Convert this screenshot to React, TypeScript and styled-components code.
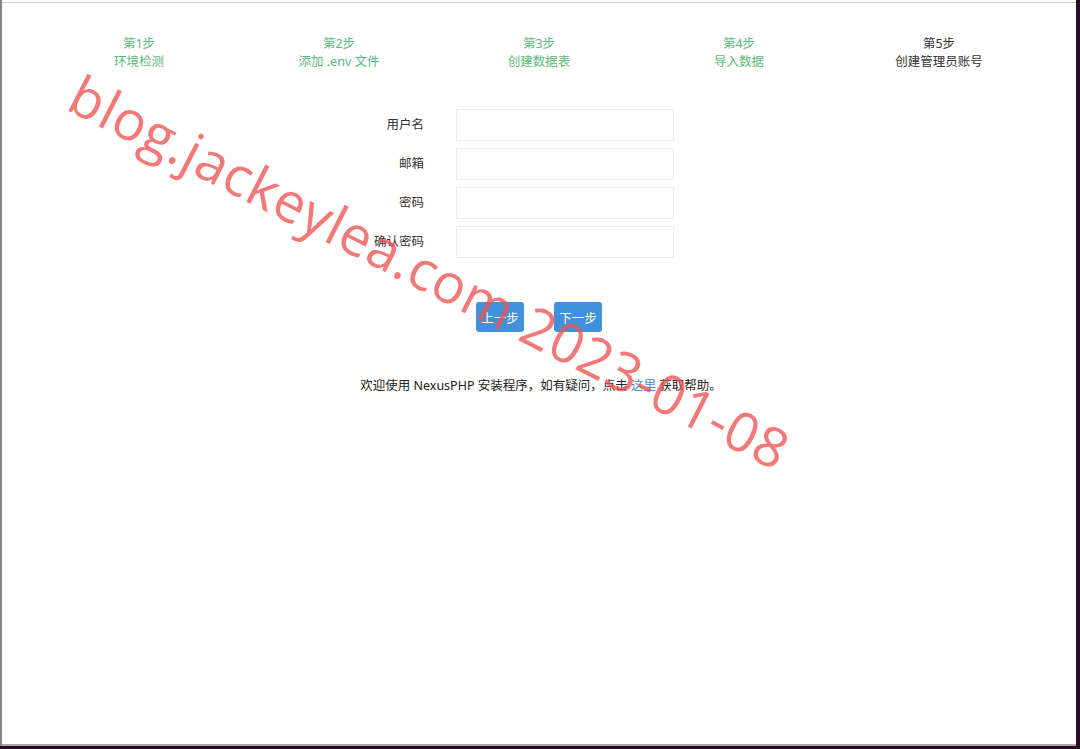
import styled, { createGlobalStyle } from 'styled-components';

const GlobalStyle = createGlobalStyle`
  html, body {
    margin: 0;
    padding: 0;
    background: #2c0a22;
    font-family: "Noto Sans", "Noto Sans CJK SC", sans-serif;
  }
`;

type Step = { no: number; title: string };

const steps: Step[] = [
    { no: 1, title: '环境检测' },
    { no: 2, title: '添加 .env 文件' },
    { no: 3, title: '创建数据表' },
    { no: 4, title: '导入数据' },
    { no: 5, title: '创建管理员账号' },
];

const fields = ['用户名', '邮箱', '密码', '确认密码'];

function App() {
    const current = 5;

    return (
        <>
            <GlobalStyle />
            <Desktop>
                <Window>
                    <TopRule />
                    <Page>
                        <Steps>
                            {steps.map(s => (
                                <StepItem key={s.no} done={s.no < current}>
                                    <div>第{s.no}步</div>
                                    <div>{s.title}</div>
                                </StepItem>
                            ))}
                        </Steps>

                        <Form>
                            {fields.map(f => (
                                <FormRow key={f}>
                                    <Label>{f}</Label>
                                    <Input type={f.includes('密码') ? 'password' : 'text'} />
                                </FormRow>
                            ))}
                        </Form>

                        <Actions>
                            <Button>上一步</Button>
                            <Button>下一步</Button>
                        </Actions>

                        <Footer>
                            欢迎使用 NexusPHP 安装程序，如有疑问，点击 <HelpLink href="#">这里</HelpLink> 获取帮助。
                        </Footer>
                    </Page>

                    {/* blog stamp laid across the page */}
                    <Stamp>blog.jackeylea.com 2023-01-08</Stamp>
                </Window>
                <SideStrip />
            </Desktop>
        </>
    );
}

const Desktop = styled.div`
  display: flex;
  height: 749px;
  overflow: hidden;
`;

const Window = styled.div`
  position: relative;
  width: 1074px;
  height: 744px;
  margin-left: 2px;
  background: #fff;
  border-bottom: 2px solid #a9a9a9;
  box-shadow: -2px 0 0 #8e7d88;
  overflow: hidden;
`;

const SideStrip = styled.div`
  flex: 1;
  background: #2c0a22;
`;

const TopRule = styled.div`
  height: 2px;
  border-bottom: 1px solid #cfcfcf;
`;

const Page = styled.div`
  display: flex;
  flex-direction: column;
  align-items: stretch;
  padding-top: 32px;
  font-size: 12.5px;
  color: #333;
`;

const Steps = styled.div`
  display: grid;
  grid-template-columns: repeat(5, 200px);
  justify-content: center;
`;

const StepItem = styled.div<{ done: boolean }>`
  text-align: center;
  line-height: 18px;
  color: ${props => props.done ? '#5cb87a' : '#333'};
`;

const Form = styled.div`
  display: flex;
  flex-direction: column;
  gap: 7px;
  margin-top: 38px;
`;

const FormRow = styled.div`
  display: grid;
  grid-template-columns: 422px 218px;
  column-gap: 32px;
  align-items: center;
`;

const Label = styled.label`
  text-align: right;
  line-height: 18px;
`;

const Input = styled.input`
  box-sizing: border-box;
  height: 32px;
  width: 100%;
  border: 1px solid #ececec;
  background: #fff;
  outline: none;
`;

const Actions = styled.div`
  display: flex;
  justify-content: center;
  gap: 30px;
  margin-top: 44px;
`;

const Button = styled.button`
  width: 48px;
  height: 30px;
  padding: 0;
  border: none;
  border-radius: 3px;
  background: #3f91db;
  color: #fff;
  font-family: inherit;
  font-size: 12.5px;
  cursor: pointer;
`;

const Footer = styled.p`
  margin: 45px 0 0;
  text-align: center;
  line-height: 18px;
  padding-left: 4px;
  color: #222;
`;

const HelpLink = styled.a`
  color: #4a8fd0;
  text-decoration: none;
`;

const Stamp = styled.div`
  position: absolute;
  left: 428px;
  top: 271px;
  transform: translate(-50%, -50%) rotate(27deg);
  white-space: nowrap;
  font-family: "Open Sans", "Liberation Sans", sans-serif;
  font-size: 55px;
  letter-spacing: 0.5px;
  color: rgba(240, 82, 82, 0.78);
  pointer-events: none;
`;

export default App;
